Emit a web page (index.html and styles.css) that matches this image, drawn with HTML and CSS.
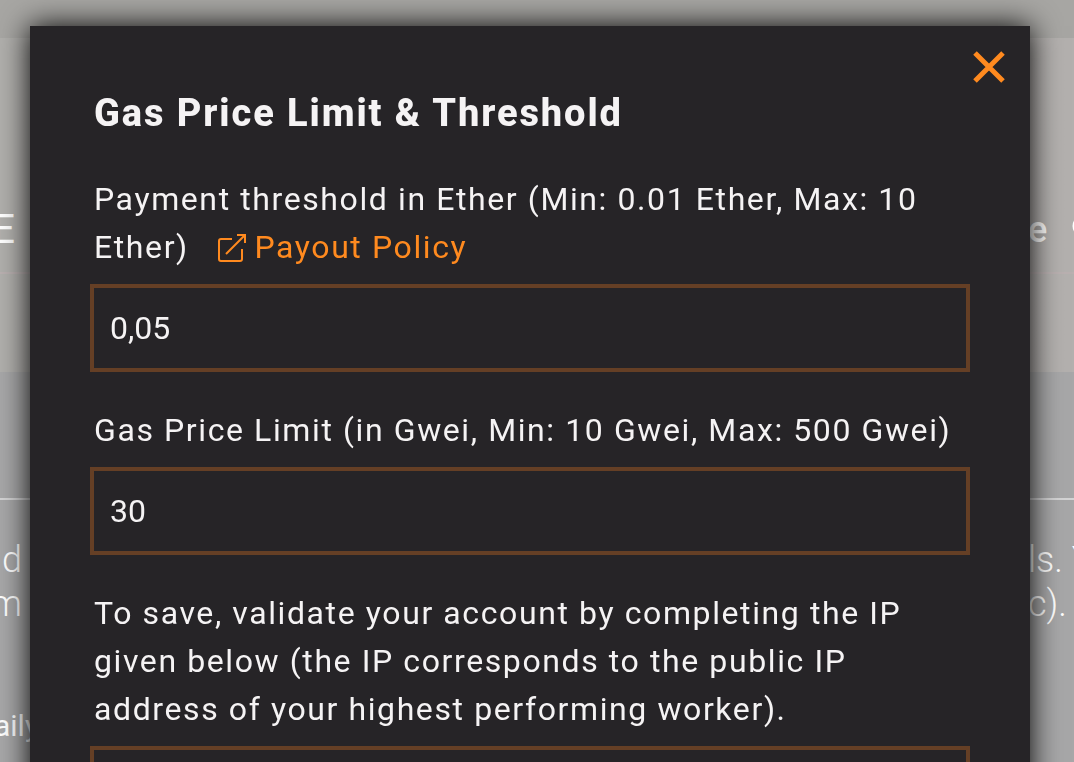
FILE: index.html
```html
<!DOCTYPE html>
<html lang="en">
<head>
  <meta charset="UTF-8" />
  <meta name="viewport" content="width=device-width, initial-scale=1.0" />
  <title>Gas Price Limit &amp; Threshold</title>
  <link rel="stylesheet" href="styles.css">
</head>
<body>
  <div class="page" aria-hidden="true">
    <div class="topbar"></div>
    <div class="band band-title">
      <span class="left">E</span>
      <span class="right">e
        <svg class="lens" viewBox="0 0 24 24"><circle cx="12" cy="8" r="9" fill="none" stroke="#fff" stroke-width="3"/></svg>
      </span>
    </div>
    <div class="band band-empty"></div>
    <div class="tabs"></div>
    <div class="copy">
      <div class="row"><span class="left">d</span><span class="right">ls. Y</span></div>
      <div class="row"><span class="left">m</span><span class="right">c).</span></div>
    </div>
    <div class="stats">aily</div>
  </div>

  <div class="overlay">
    <form class="modal" role="dialog" aria-labelledby="title">
      <button type="button" class="close" aria-label="Close">
        <svg viewBox="0 0 32 32"><path d="M2 2L30 30M30 2L2 30"/></svg>
      </button>
      <h2 id="title">Gas Price Limit &amp; Threshold</h2>

      <div class="field">
        <p class="text">
          <label for="threshold">Payment threshold in Ether (Min: 0.01 Ether, Max: 10 Ether)</label>
          <a href="#" class="policy"><svg viewBox="0 0 28 28"><path d="M14 5H3Q1 5 1 7V25Q1 27 3 27H22Q24 27 24 25V15M8 20L27 1M19 1H27V9"/></svg>Payout Policy</a>
        </p>
        <input type="text" id="threshold" value="0,05">
      </div>

      <div class="field">
        <label class="text" for="gas">Gas Price Limit (in Gwei, Min: 10 Gwei, Max: 500 Gwei)</label>
        <input type="text" id="gas" value="30">
      </div>

      <div class="field">
        <label class="text" for="ip">To save, validate your account by completing the IP given below (the IP corresponds to the public IP address of your highest performing worker).</label>
        <input type="text" id="ip">
      </div>
    </form>
  </div>
</body>
</html>
```

FILE: styles.css
```css
* {
  box-sizing: border-box;
}

body {
  margin: 0;
  height: 100vh;
  overflow: hidden;
  font-family: Roboto, sans-serif;
  font-weight: 400;
  font-size: 32px;
  color: #f5f3f4;
  background: #a7a7a8;
}

/* dimmed page behind the dialog */
.page {
  color: #fff;
  overflow: hidden;
}

.topbar {
  height: 38px;
  background: #a7a6a3;
}

.band {
  background: linear-gradient(to right, #b0afac, #b3b0ae);
}

.band-title {
  display: flex;
  justify-content: space-between;
  align-items: flex-end;
  height: 236px;
  padding-bottom: 18px;
  border-bottom: 2px solid #b9b0b0;
  font-size: 40px;
  line-height: 48px;
}

.band-empty {
  height: 98px;
}

.tabs {
  height: 128px;
  border-bottom: 2px solid #d3d3d4;
}

.copy {
  padding-top: 38px;
  font-weight: 300;
}

.row {
  display: flex;
  justify-content: space-between;
  font-size: 36px;
  line-height: 44px;
}

.left {
  display: flex;
  justify-content: flex-end;
  width: 22px;
}

.band-title .left {
  width: 15px;
}

.right {
  width: 46px;
  white-space: nowrap;
}

.band-title .right {
  display: flex;
  align-items: center;
  gap: 24px;
  font-size: 36px;
  font-weight: 500;
}

.lens {
  flex: none;
  width: 24px;
  height: 24px;
}

.stats {
  margin: 80px 0 0 -6px;
  font-size: 30px;
  line-height: 40px;
}

.overlay {
  position: fixed;
  inset: 0;
  overflow: hidden;
  padding: 26px 44px 0 30px;
}

.modal {
  position: relative;
  min-height: 100%;
  padding: 63px 60px;
  background: #262427;
  box-shadow: 0 0 28px #000;
}

h2 {
  margin: 0 4px 38px;
  font-size: 38px;
  line-height: 48px;
  font-weight: 800;
  letter-spacing: 0.05em;
}

.field {
  margin-bottom: 34px;
}

.text {
  display: block;
  margin: 0 4px 13px;
  line-height: 48px;
  letter-spacing: 0.05em;
}

.policy {
  margin-left: 20px;
  color: #ff8a1f;
  text-decoration: none;
}

.policy svg {
  width: 28px;
  height: 28px;
  margin-right: 8px;
  vertical-align: -4px;
  fill: none;
  stroke: currentColor;
  stroke-width: 2;
}

input {
  display: block;
  width: 100%;
  height: 88px;
  padding: 0 16px;
  border: 4px solid #653f25;
  border-radius: 0;
  background: transparent;
  color: inherit;
  font: inherit;
  outline: none;
}

.close {
  position: absolute;
  top: 25px;
  right: 25px;
  width: 32px;
  height: 32px;
  padding: 0;
  border: none;
  background: none;
  color: #ff8a1f;
  cursor: pointer;
}

.close svg {
  display: block;
  fill: none;
  stroke: currentColor;
  stroke-width: 5;
}
```
